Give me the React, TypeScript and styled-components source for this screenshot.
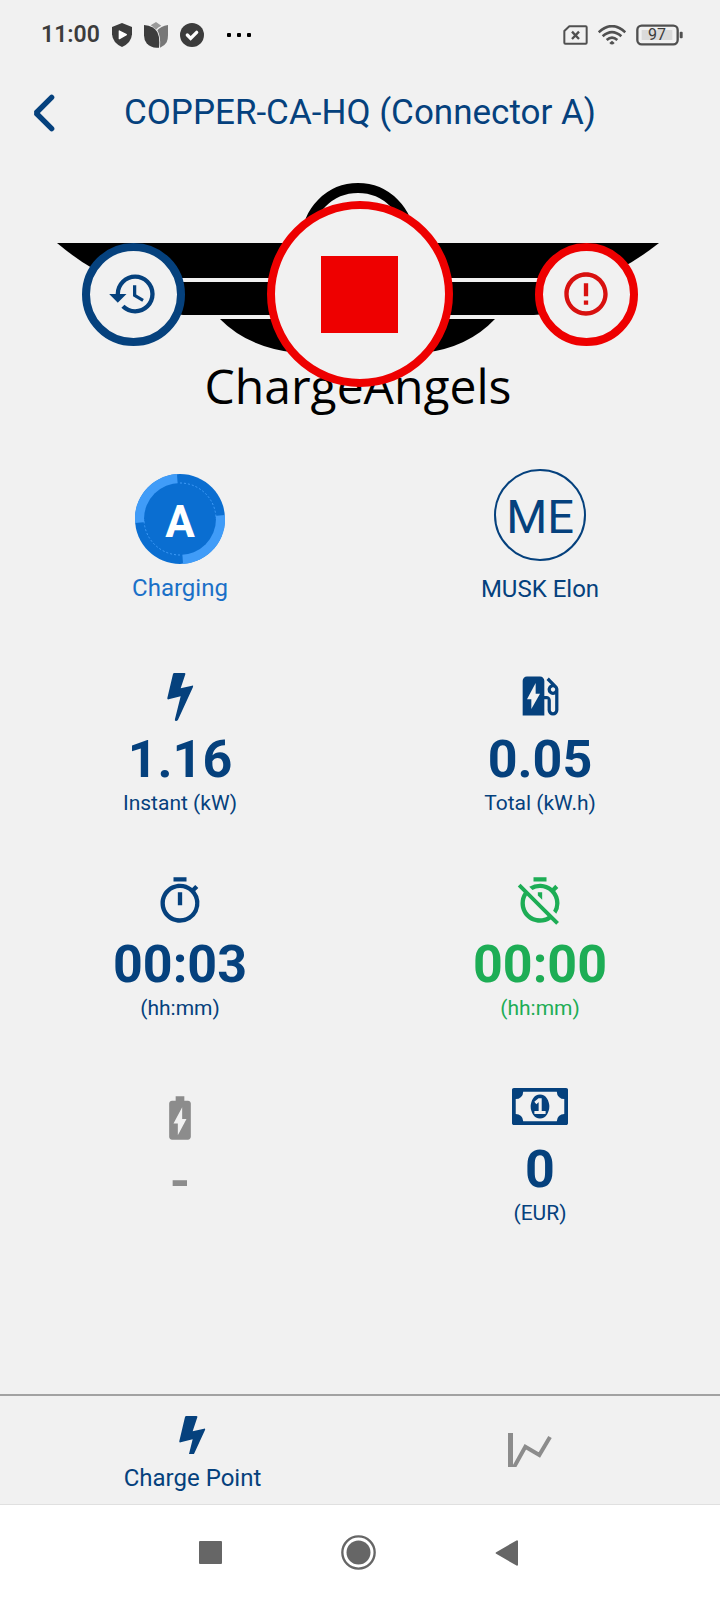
import React from 'react';
import styled, { createGlobalStyle } from 'styled-components';
import { MdBatteryChargingFull, MdErrorOutline, MdEvStation, MdHistory } from 'react-icons/md';

const color = {
  page: '#f1f1f1',
  primary: '#05417d',
  danger: '#ee0000',
  dangerIcon: '#d8110f',
  success: '#1dad55',
  muted: '#8c8c8c',
  charging: '#0a6ed1',
  chargingLight: '#409cf8',
  chargingText: '#1a70c8',
  status: '#3c3c3c',
  nav: '#666666',
};

const GlobalStyle = createGlobalStyle`
  * { box-sizing: border-box; }
  body {
    margin: 0;
    background: ${color.page};
    font-family: Roboto, "Liberation Sans", sans-serif;
  }
  button {
    margin: 0;
    padding: 0;
    border: 0;
    background: none;
    font: inherit;
    color: inherit;
    cursor: pointer;
  }
  svg { display: block; flex: none; }
`;

const Screen = styled.div`
  display: flex;
  flex-direction: column;
  min-height: 100vh;
  background: ${color.page};
`;

/* ---------- status bar ---------- */

const StatusBar = styled.div`
  display: flex;
  align-items: center;
  justify-content: space-between;
  height: 68px;
  padding: 2px 37px 0 41px;
  color: ${color.status};
`;

const StatusGroup = styled.div<{ $gap: number }>`
  display: flex;
  align-items: center;
  gap: ${(p) => p.$gap}px;
`;

const Clock = styled.time`
  font-size: 23px;
  line-height: 28px;
  font-weight: 600;
`;

const MoreNotifications = styled.div`
  padding-left: 11px;
`;

const Battery = styled.div`
  display: grid;
  align-items: center;
  > * { grid-area: 1 / 1; }
`;

const BatteryLevel = styled.span`
  padding-left: 12px;
  font-size: 16px;
  line-height: 20px;
`;

/* ---------- header ---------- */

const Header = styled.header`
  display: grid;
  grid-template-columns: 72px 1fr 72px;
  align-items: center;
  height: 88px;
  padding-top: 2px;
`;

const BackButton = styled.button`
  display: flex;
  align-items: center;
  height: 72px;
  padding-left: 32px;
`;

const Title = styled.h1`
  margin: 0;
  font-size: 35px;
  line-height: 44px;
  font-weight: 400;
  text-align: center;
  white-space: nowrap;
  color: ${color.primary};
`;

/* ---------- logo and action buttons ---------- */

const Hero = styled.section`
  display: grid;
  justify-items: center;
  height: 279px;
  padding-top: 27px;
  > * { grid-area: 1 / 1; }
`;

const Brand = styled.div`
  display: flex;
  flex-direction: column;
  align-items: center;
  padding-right: 4px;
`;

const BrandName = styled.span`
  font-family: "Open Sans", "Liberation Sans", sans-serif;
  font-size: 48px;
  line-height: 66px;
  color: #000;
`;

const Actions = styled.div`
  display: flex;
  align-items: center;
  justify-content: space-between;
  align-self: start;
  width: 100%;
  max-width: 720px;
  padding: 18px 82px 0;
`;

const RoundButton = styled.button<{ $size: number; $tone: string }>`
  display: flex;
  align-items: center;
  justify-content: center;
  width: ${(p) => p.$size}px;
  height: ${(p) => p.$size}px;
  padding-right: 2px;
  border: 8px solid ${(p) => p.$tone};
  border-radius: 50%;
  background: ${color.page};
`;

const StopSquare = styled.span`
  width: 77px;
  height: 77px;
  background: ${color.danger};
`;

/* ---------- details grid ---------- */

const Details = styled.main`
  flex: 1;
  display: grid;
  grid-template-columns: 1fr 1fr;
  grid-auto-rows: 205px;
  align-content: start;
`;

const Cell = styled.section<{ $tone?: string }>`
  display: flex;
  flex-direction: column;
  align-items: center;
  justify-content: center;
  color: ${(p) => p.$tone ?? color.primary};
`;

const Identity = styled(Cell)<{ $gap: number; $bottom: number }>`
  gap: ${(p) => p.$gap}px;
  padding-bottom: ${(p) => p.$bottom}px;
`;

const IconSlot = styled.div`
  display: flex;
  align-items: center;
  justify-content: center;
  height: 52px;
`;

const Value = styled.strong`
  padding-top: 7px;
  font-size: 52px;
  line-height: 62px;
  font-weight: 700;
`;

const Unit = styled.span`
  font-size: 21px;
  line-height: 24px;
`;

const Caption = styled.span`
  font-size: 24px;
  line-height: 28px;
`;

const ConnectorBadge = styled.div`
  display: grid;
  place-items: center;
  > * { grid-area: 1 / 1; }
`;

const ConnectorLetter = styled.strong`
  padding-top: 6px;
  font-size: 44px;
  line-height: 52px;
  font-weight: 700;
  color: #fff;
`;

const Avatar = styled.div`
  display: flex;
  align-items: center;
  justify-content: center;
  width: 92px;
  height: 92px;
  padding-top: 4px;
  border: 2px solid ${color.primary};
  border-radius: 50%;
  font-size: 47px;
  line-height: 56px;
`;

/* ---------- bottom bars ---------- */

const TabBar = styled.nav`
  display: grid;
  grid-template-columns: 1fr 1fr;
  height: 110px;
  padding: 0 22px 0 24px;
  border-top: 2px solid #a2a2a2;
`;

const Tab = styled.button<{ $tone: string }>`
  display: flex;
  flex-direction: column;
  align-items: center;
  justify-content: center;
  gap: 10px;
  color: ${(p) => p.$tone};
`;

const LabelledTab = styled(Tab)`
  padding-top: 6px;
`;

const SystemNav = styled.nav`
  display: flex;
  align-items: center;
  justify-content: center;
  gap: 100px;
  height: 96px;
  padding-right: 3px;
  border-top: 1px solid #e0e0e0;
  background: #fff;
`;

const SystemButton = styled.button`
  display: flex;
  align-items: center;
  justify-content: center;
  width: 48px;
  height: 48px;
`;

/* ---------- drawings ---------- */

const ShieldIcon = () => (
  <svg width="20" height="24" viewBox="0 0 60 72">
    <path d="M30 0 L60 12 V34 Q58 60 30 72 Q2 60 0 34 V12 Z" fill={color.status} />
    <path d="M22 24 L43 35 L22 47 Z" fill="#fff" stroke="#fff" strokeWidth="4" strokeLinejoin="round" />
  </svg>
);

const TulipIcon = () => (
  <svg width="24" height="26" viewBox="0 0 72 78">
    <path d="M36 0 L52 11 Q42 15 36 23 Q30 15 20 10 Z" fill="#9a9a9a" />
    <path d="M0 9 Q30 12 40 30 Q48 46 45 77 Q22 80 8 64 Q0 54 0 40 Z" fill={color.status} />
    <path d="M72 9 Q50 13 40 25 Q51 42 48 77 Q62 72 68 61 Q72 52 72 40 Z" fill="#777" />
  </svg>
);

const CheckIcon = () => (
  <svg width="24" height="24" viewBox="0 0 72 72">
    <circle cx="36" cy="36" r="36" fill={color.status} />
    <path d="M22 36 L32 46 L50 28" fill="none" stroke="#fff" strokeWidth="10" strokeLinecap="round" />
  </svg>
);

const DotsIcon = () => (
  <svg width="25" height="4" viewBox="0 0 25 4">
    <rect x="0" width="4" height="4" rx="1" />
    <rect x="10" width="4" height="4" rx="1" />
    <rect x="20" width="4" height="4" rx="1" />
  </svg>
);

const SimIcon = () => (
  <svg width="25" height="20" viewBox="0 0 75 60" fill="none" stroke="#505050" strokeWidth="6">
    <path d="M19 4 H68 Q71 4 71 7 V53 Q71 56 68 56 H7 Q4 56 4 53 V18 Z" strokeLinejoin="round" />
    <path d="M27 20 L48 42 M48 20 L27 42" strokeWidth="7" />
  </svg>
);

const WifiIcon = () => (
  <svg width="28" height="20" viewBox="0 0 84 60" fill="none" stroke="#505050" strokeWidth="8">
    <path d="M2 22 Q42 -15 82 22" />
    <path d="M14 34 Q42 9 70 34" />
    <path d="M26 45 Q42 31 58 45" />
    <path d="M42 47 L50 54 Q42 63 34 54 Z" fill="#505050" stroke="none" />
  </svg>
);

const BatteryIcon = () => (
  <svg width="47" height="22" viewBox="0 0 141 66">
    <rect x="4" y="5" width="121" height="56" rx="13" fill="none" stroke="#505050" strokeWidth="7" />
    <rect x="17" y="18" width="92" height="30" fill="#dadada" />
    <rect x="131" y="23" width="9" height="20" rx="3" fill="#505050" />
  </svg>
);

const BackIcon = () => (
  <svg width="24" height="38" viewBox="0 0 72 114">
    <path d="M59 10 L12 57 L59 104" fill="none" stroke={color.primary} strokeWidth="16" strokeLinecap="round" strokeLinejoin="bevel" />
  </svg>
);

const WingsLogo = () => (
  <svg width="602" height="170" viewBox="57 183 602 170">
    <circle cx="358" cy="239" r="51" fill="none" stroke="#000" strokeWidth="10" />
    <path d="M57 243 H659 Q626 269 598 278 H113 Q88 269 57 243 Z" />
    <path d="M120 282 H594 Q556 315 534 315 H183 Q156 312 120 282 Z" />
    <path d="M220 319 H495 Q462 354 404 354 H312 Q252 352 220 319 Z" />
  </svg>
);

const ConnectorRing = () => (
  <svg width="90" height="90" viewBox="0 0 90 90">
    <circle cx="45" cy="45" r="45" fill={color.charging} />
    <path d="M45 45 L90 41 A45 45 0 0 1 48 90 Z" fill={color.chargingLight} />
    <path d="M45 45 L0 49 A45 45 0 0 1 42 0 Z" fill={color.chargingLight} />
    <circle cx="45" cy="45" r="36" fill={color.charging} />
    <path d="M45 9 A36 36 0 0 1 81 45 M45 81 A36 36 0 0 1 9 45" fill="none" stroke={color.chargingLight} strokeWidth="1" strokeDasharray="2 2" />
  </svg>
);

const BoltIcon = ({ height }: { height: number }) => (
  <svg width="27" height={height} viewBox={`0 -6 81 ${height * 3}`}>
    <path
      d="M22 0 H52 Q56 0 55 4 L41 46 L75 38 Q80 37 78 42 L33 140 Q30 145 26 144 Q22 143 24 138 L41 70 L5 79 Q0 80 1 75 L18 3 Q19 0 22 0 Z"
      fill="currentColor"
    />
  </svg>
);

const TimerIcon = () => (
  <svg width="52" height="52" viewBox="0 0 24 24" fill="currentColor">
    <path d="M15 1H9v2h6V1zm-4 13h2V8h-2v6zm8.03-6.61l1.42-1.42c-.43-.51-.9-.99-1.41-1.41l-1.42 1.42A8.962 8.962 0 0 0 12 4c-4.97 0-9 4.03-9 9s4.02 9 9 9a8.994 8.994 0 0 0 7.03-14.61zM12 20c-3.87 0-7-3.13-7-7s3.13-7 7-7 7 3.13 7 7-3.13 7-7 7z" />
  </svg>
);

const TimerOffIcon = () => (
  <svg width="52" height="52" viewBox="0 0 24 24" fill="currentColor">
    <path d="M19.04 4.55l-1.42 1.42a9.012 9.012 0 0 0-10.57-.49l1.46 1.46C9.53 6.35 10.73 6 12 6c3.87 0 7 3.13 7 7 0 1.27-.35 2.47-.94 3.49l1.45 1.45A8.878 8.878 0 0 0 21 13c0-2.12-.74-4.07-1.97-5.61l1.42-1.42-1.41-1.42zM15 1H9v2h6V1zm-4 8.44l2 2V8h-2v1.44zM3.02 4L1.75 5.27 4.5 8.03A8.905 8.905 0 0 0 3 13c0 4.97 4.02 9 9 9 1.84 0 3.55-.55 4.98-1.5l2.5 2.5 1.27-1.27-7.71-7.71L3.02 4zM12 20c-3.87 0-7-3.13-7-7 0-1.28.35-2.48.95-3.52l9.56 9.56c-1.03.61-2.23.96-3.51.96z" />
  </svg>
);

const BanknoteIcon = () => (
  <svg width="56" height="37" viewBox="0 256 1920 1280" preserveAspectRatio="none">
    <path
      fill="currentColor"
      d="M1280 896q0 70-21 142t-59.5 134-101.5 101-138 39-138-39-101.5-101-59.5-134-21-142 21-142 59.5-134 101.5-101 138-39 138 39 101.5 101 59.5 134 21 142zm512 256v-512q-106 0-181-75t-75-181h-1152q0 106-75 181t-181 75v512q106 0 181 75t75 181h1152q0-106 75-181t181-75zm128-832v1152q0 26-19 45t-45 19h-1792q-26 0-45-19t-19-45v-1152q0-26 19-45t45-19h1792q26 0 45 19t19 45z"
    />
    <path d="M800 775 L930 660 H966 V1104 M768 1104 H1152" fill="none" stroke={color.page} strokeWidth="105" />
  </svg>
);

const ChartIcon = () => (
  <svg width="44" height="34" viewBox="0 0 132 102" fill="none" stroke="currentColor">
    <path d="M7.5 0 V102" strokeWidth="15" />
    <path d="M15 108 L52 41 L94 66 L126 12" strokeWidth="12" />
  </svg>
);

const RecentsIcon = () => (
  <svg width="23" height="23" viewBox="0 0 23 23">
    <rect width="23" height="23" rx="1" fill={color.nav} />
  </svg>
);

const HomeIcon = () => (
  <svg width="35" height="35" viewBox="0 0 105 105">
    <circle cx="52.5" cy="52.5" r="48.5" fill="none" stroke={color.nav} strokeWidth="7" />
    <circle cx="52.5" cy="52.5" r="36" fill={color.nav} />
  </svg>
);

const TriangleIcon = () => (
  <svg width="24" height="26" viewBox="0 0 72 78">
    <path d="M5 39 L66 4 V74 Z" fill={color.nav} stroke={color.nav} strokeWidth="6" strokeLinejoin="round" />
  </svg>
);

/* ---------- page ---------- */

interface MetricProps {
  icon: React.ReactNode;
  value: string;
  unit?: string;
  tone?: string;
}

const Metric = ({ icon, value, unit, tone }: MetricProps) => (
  <Cell $tone={tone}>
    <IconSlot>{icon}</IconSlot>
    <Value>{value}</Value>
    {unit && <Unit>{unit}</Unit>}
  </Cell>
);

export default function App() {
  return (
    <>
      <GlobalStyle />
      <Screen>
        <StatusBar>
          <StatusGroup $gap={12}>
            <Clock>11:00</Clock>
            <ShieldIcon />
            <TulipIcon />
            <CheckIcon />
            <MoreNotifications>
              <DotsIcon />
            </MoreNotifications>
          </StatusGroup>
          <StatusGroup $gap={10}>
            <SimIcon />
            <WifiIcon />
            <Battery>
              <BatteryIcon />
              <BatteryLevel>97</BatteryLevel>
            </Battery>
          </StatusGroup>
        </StatusBar>

        <Header>
          <BackButton aria-label="Back">
            <BackIcon />
          </BackButton>
          <Title>COPPER-CA-HQ (Connector A)</Title>
        </Header>

        <Hero>
          <Brand>
            <WingsLogo />
            <BrandName>ChargeAngels</BrandName>
          </Brand>
          <Actions>
            <RoundButton $size={103} $tone={color.primary} aria-label="Session history">
              <MdHistory size={52} color={color.primary} />
            </RoundButton>
            <RoundButton $size={186} $tone={color.danger} aria-label="Stop charging">
              <StopSquare />
            </RoundButton>
            <RoundButton $size={103} $tone={color.danger} aria-label="Report an error">
              <MdErrorOutline size={52} color={color.dangerIcon} />
            </RoundButton>
          </Actions>
        </Hero>

        <Details>
          <Identity $gap={10} $bottom={0} $tone={color.chargingText}>
            <ConnectorBadge>
              <ConnectorRing />
              <ConnectorLetter>A</ConnectorLetter>
            </ConnectorBadge>
            <Caption>Charging</Caption>
          </Identity>
          <Identity $gap={14} $bottom={4}>
            <Avatar>ME</Avatar>
            <Caption>MUSK Elon</Caption>
          </Identity>
          <Metric icon={<BoltIcon height={51} />} value="1.16" unit="Instant (kW)" />
          <Metric icon={<MdEvStation size={52} />} value="0.05" unit="Total (kW.h)" />
          <Metric icon={<TimerIcon />} value="00:03" unit="(hh:mm)" />
          <Metric icon={<TimerOffIcon />} value="00:00" unit="(hh:mm)" tone={color.success} />
          <Metric icon={<MdBatteryChargingFull size={52} />} value="-" tone={color.muted} />
          <Metric icon={<BanknoteIcon />} value="0" unit="(EUR)" />
        </Details>

        <TabBar>
          <LabelledTab $tone={color.primary}>
            <BoltIcon height={40} />
            <Caption>Charge Point</Caption>
          </LabelledTab>
          <Tab $tone={color.muted} aria-label="Chart">
            <ChartIcon />
          </Tab>
        </TabBar>

        <SystemNav>
          <SystemButton aria-label="Recent apps">
            <RecentsIcon />
          </SystemButton>
          <SystemButton aria-label="Home">
            <HomeIcon />
          </SystemButton>
          <SystemButton aria-label="Back">
            <TriangleIcon />
          </SystemButton>
        </SystemNav>
      </Screen>
    </>
  );
}
